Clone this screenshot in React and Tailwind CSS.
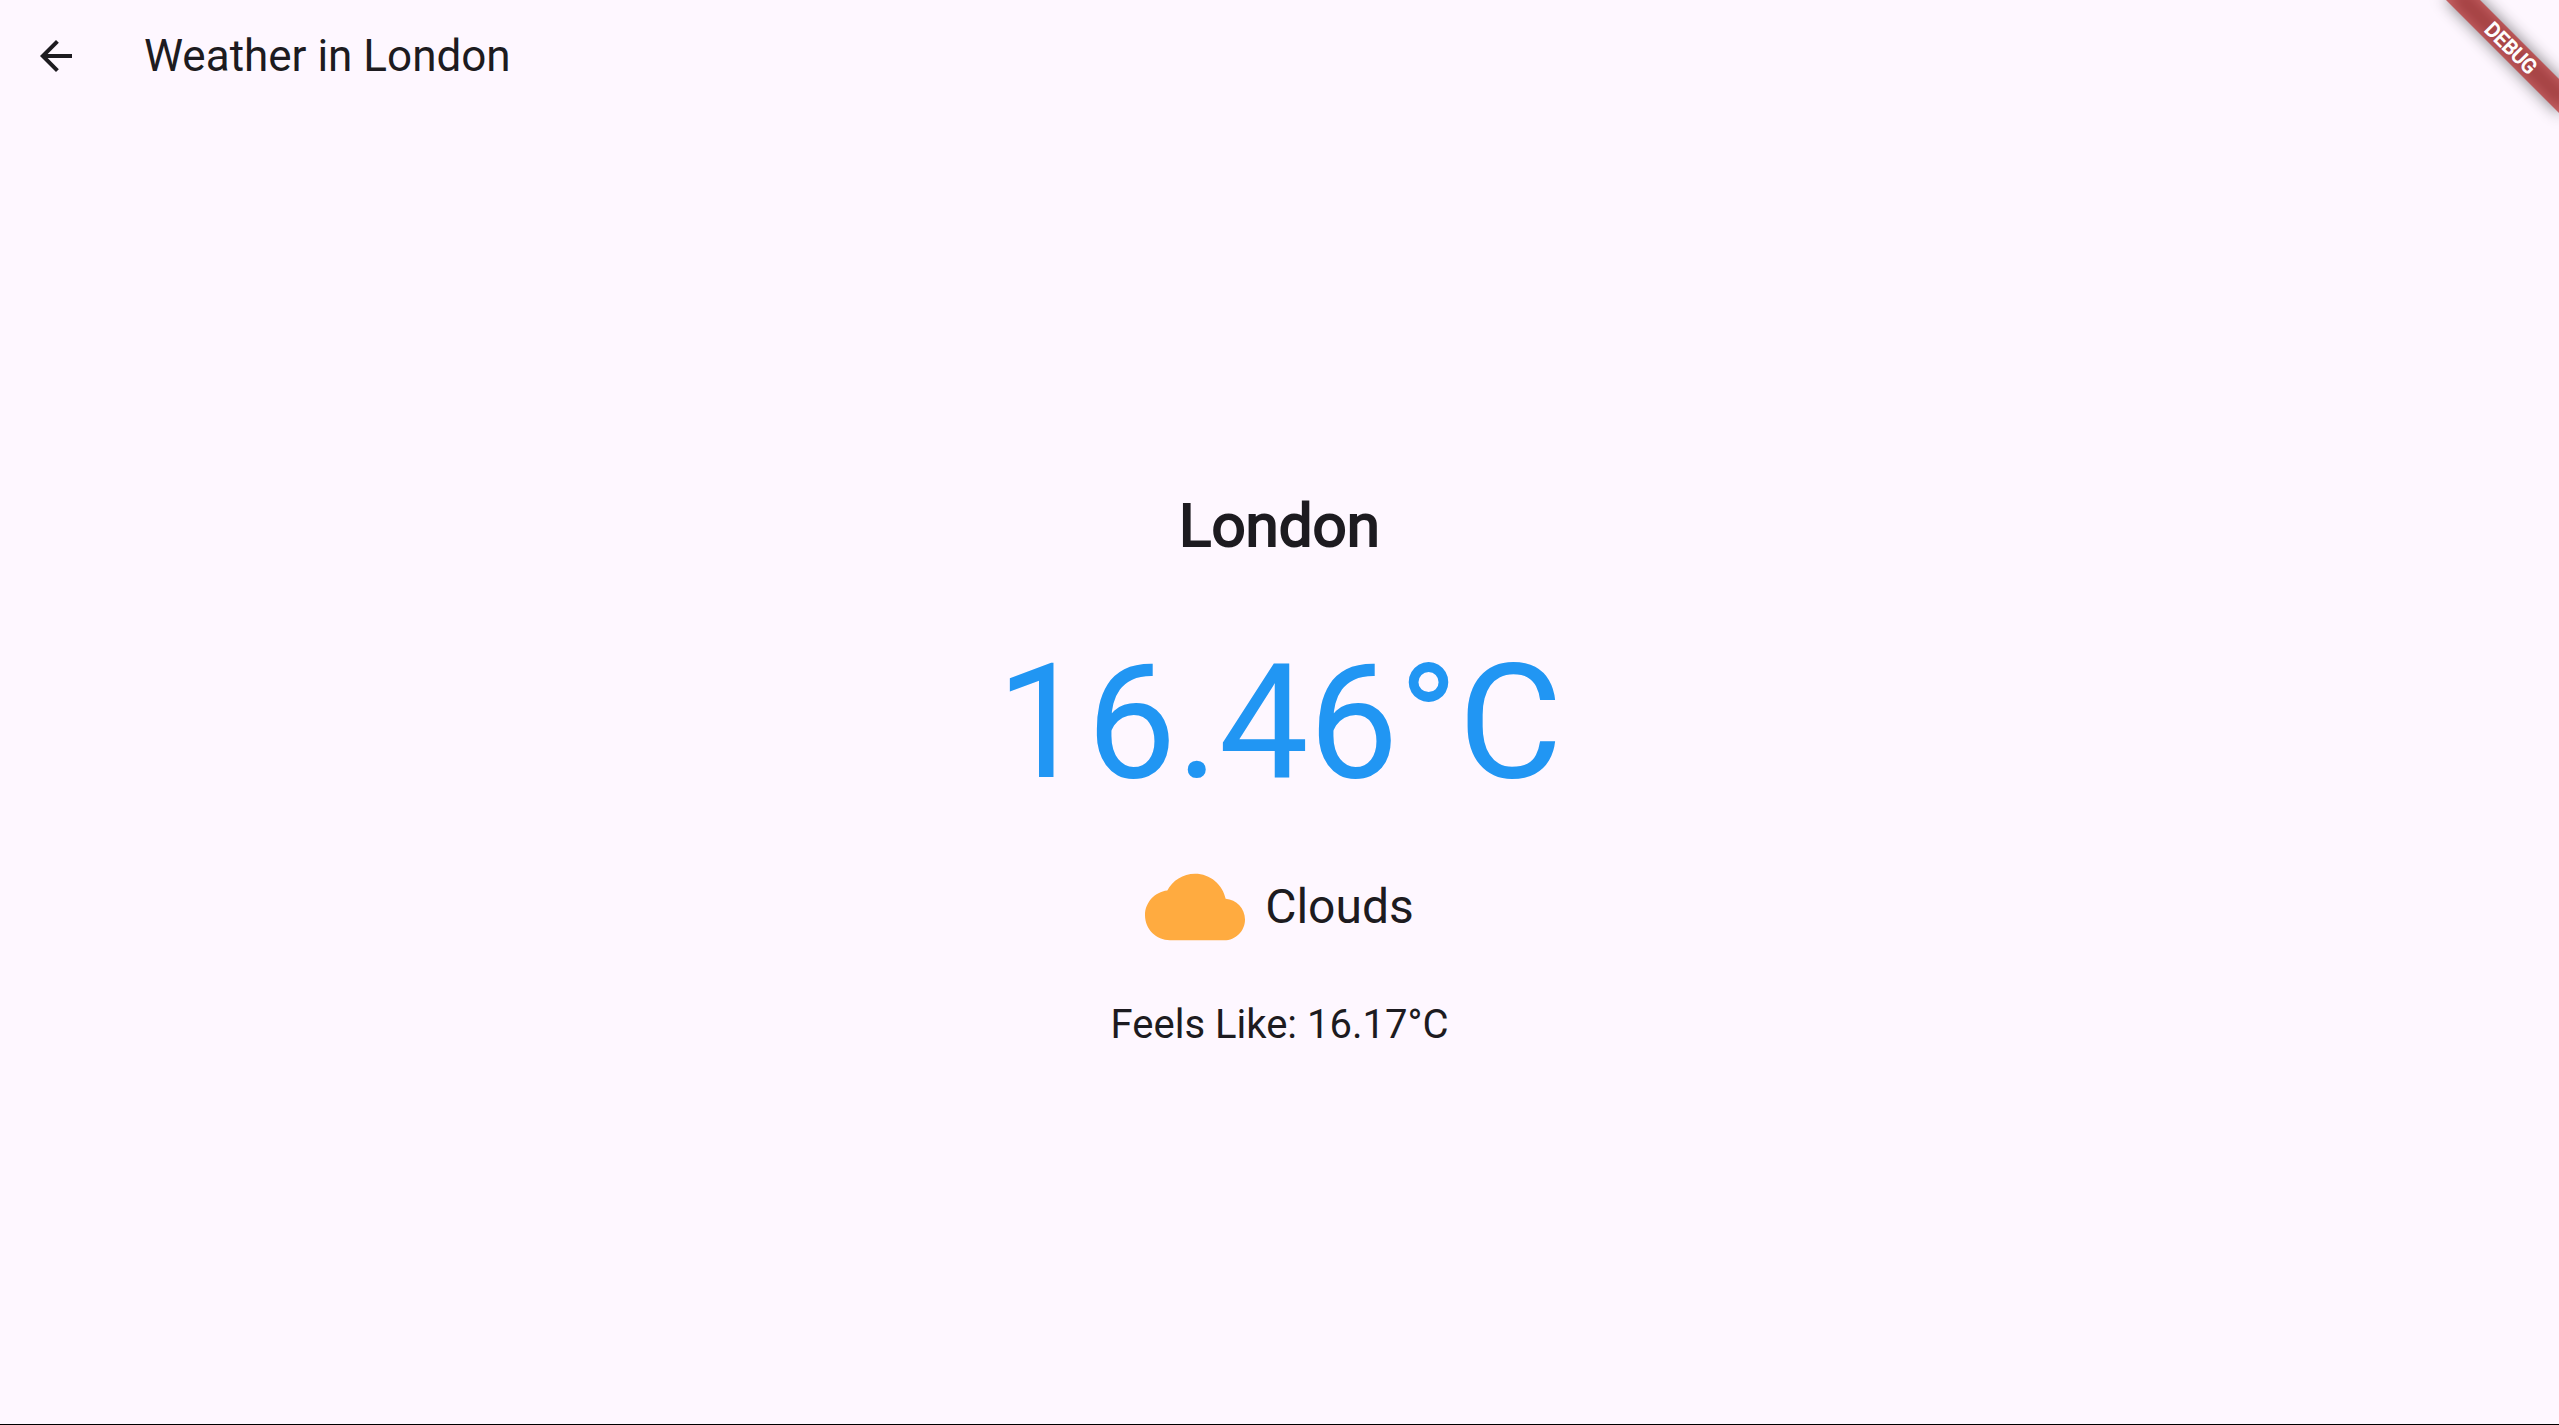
import React from "react";

function BackIcon() {
  return (
    <svg viewBox="0 0 24 24" className="size-12" fill="currentColor" aria-hidden="true">
      <path d="M20 11H7.83l5.59-5.59L12 4l-8 8 8 8 1.41-1.41L7.83 13H20v-2z" />
    </svg>
  );
}

function CloudIcon() {
  return (
    <svg viewBox="0 0 24 24" className="size-[100px] text-[#ffab40]" fill="currentColor" aria-hidden="true">
      <path d="M19.35 10.04C18.67 6.59 15.64 4 12 4 9.11 4 6.6 5.64 5.35 8.04 2.34 8.36 0 10.91 0 14c0 3.31 2.69 6 6 6h13c2.76 0 5-2.24 5-5 0-2.64-2.05-4.78-4.65-4.96z" />
    </svg>
  );
}

function DebugBanner() {
  return (
    <div className="pointer-events-none absolute top-0 right-0 size-40 overflow-hidden">
      <div className="absolute top-9 -right-8 h-6 w-40 rotate-45">
        <div className="absolute inset-0 bg-black/50 blur-[8px]" />
        <div className="relative flex h-6 items-center justify-center bg-[#b71c1c]/63 text-xl leading-6 font-normal text-white [-webkit-text-stroke:1px]">
          DEBUG
        </div>
      </div>
    </div>
  );
}

export default function App() {
  return (
    <div className="relative flex min-h-screen flex-col border-b border-black bg-[#fef7ff] font-[Roboto,sans-serif] text-[#1d1b20]">
      <header className="flex h-28 items-center gap-12 px-4">
        <button type="button" aria-label="Back" className="flex size-20 items-center justify-center rounded-full">
          <BackIcon />
        </button>
        <h1 className="pb-px text-[44px] leading-14">Weather in London</h1>
      </header>
      <main className="flex flex-1 flex-col items-center justify-center">
        <h2 className="text-[60px] leading-[86px] font-normal [-webkit-text-stroke:2px]">London</h2>
        <p className="mt-10 text-[160px] leading-[228px] text-[#2196f3]">16.46°C</p>
        <div className="mt-5 flex items-center gap-5">
          <CloudIcon />
          <p className="text-5xl leading-[68px]">Clouds</p>
        </div>
        <p className="mt-10 text-[40px] leading-14">Feels Like: 16.17°C</p>
      </main>
      <DebugBanner />
    </div>
  );
}
